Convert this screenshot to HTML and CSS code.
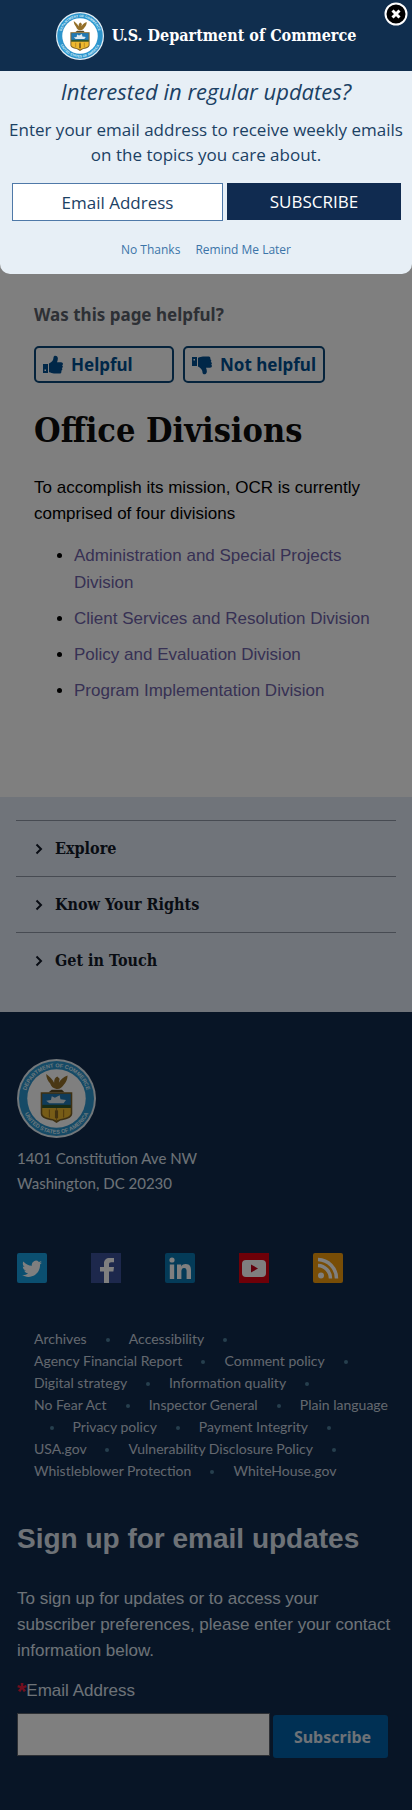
FILE: index.html
```
<!DOCTYPE html>
<html lang="en">
<head>
<meta charset="utf-8">
<meta name="viewport" content="width=device-width, initial-scale=1">
<title>Office Divisions | U.S. Department of Commerce</title>
<link rel="stylesheet" href="styles.css">
</head>
<body>
<svg class="defs" aria-hidden="true">
  <symbol id="seal" viewBox="0 0 100 100" overflow="visible">
    <circle cx="50" cy="50" r="50" fill="#e4eef5"/>
    <circle cx="50" cy="50" r="47.500" fill="#2c94cc"/>
    <circle cx="50" cy="50" r="37" fill="#fff"/>
    <path id="ring-top" d="M10.500 50a39.500 39.500 0 0 1 79 0" fill="none"/>
    <path id="ring-bottom" d="M5.500 50a44.500 44.500 0 0 0 89 0" fill="none"/>
    <g class="seal-text">
      <text><textPath href="#ring-top" startOffset="50%">DEPARTMENT OF COMMERCE</textPath></text>
      <text><textPath href="#ring-bottom" startOffset="50%">UNITED STATES OF AMERICA</textPath></text>
    </g>
    <path d="M50 38c-4-1-7-3-8-7-3-3-5-7-5-12 4 3 8 7 10 11 0-4 1-7 4-8l3 3-1 5c2-4 6-7 11-9 0 5-2 9-5 12-2 3-4 5-8 5z" fill="#94702a"/>
    <path d="M44 39h13l3 3H40z" fill="#5b4a24"/>
    <path d="M30 42h40v27c0 6-9 8-15 9l-5 3-5-3c-6-1-15-3-15-9z" fill="#7d6125"/>
    <path d="M32 44h36v15H32z" fill="#2179b4"/>
    <path d="M37 53l6-1 1-5 4 2 6-3 1 5 7 1-3 4H41z" fill="#dfeaf0"/>
    <path d="M32 58h36v4H32z" fill="#31582f"/>
    <path d="M32 62h36v7c0 4-8 6-13 7l-5 2-5-2c-5-1-13-3-13-7z" fill="#efb92f"/>
    <path d="M50 62v16M41 64v10M59 64v10" stroke="#a97a20" stroke-width="1.500"/>
    <path d="M48 65h4v10h-4z" fill="#876520"/>
  </symbol>
  <symbol id="thumb" viewBox="0 0 20 20">
    <path d="M0 9h5v9H0zM1.500 14.500v1.500H3v-1.500z" fill-rule="evenodd"/>
    <path d="M6 8.500C9 7 10.500 5 10.500 2.500c0-2.500 4-2.500 4.300.5.200 1.600-.3 3-.8 4.200H18c2.200 0 2.500 2.500 1.100 3 1.200.8.900 2.500-.3 2.800.9.900.5 2.400-.6 2.700.6 1.200 0 2.800-1.400 2.800H11c-2 0-3-.8-5-1.200z"/>
  </symbol>
</svg>

<main class="content">
  <section class="feedback">
    <h2 class="feedback-title">Was this page helpful?</h2>
    <div class="feedback-buttons">
      <button class="vote vote-yes" type="button"><svg class="vote-icon"><use href="#thumb"/></svg>Helpful</button>
      <button class="vote" type="button"><svg class="vote-icon vote-icon-down"><use href="#thumb"/></svg>Not helpful</button>
    </div>
  </section>
  <h1 class="page-title">Office Divisions</h1>
  <p class="intro">To accomplish its mission, OCR is currently comprised of four divisions</p>
  <ul class="divisions">
    <li><a href="#">Administration and Special Projects Division</a></li>
    <li><a href="#">Client Services and Resolution Division</a></li>
    <li><a href="#">Policy and Evaluation Division</a></li>
    <li><a href="#">Program Implementation Division</a></li>
  </ul>
</main>

<nav class="sections" aria-label="Sections">
  <button class="section-toggle" type="button"><svg class="chevron" viewBox="0 0 8 12"><path d="M1.500 1.500L6 6l-4.500 4.500"/></svg>Explore</button>
  <button class="section-toggle" type="button"><svg class="chevron" viewBox="0 0 8 12"><path d="M1.500 1.500L6 6l-4.500 4.500"/></svg>Know Your Rights</button>
  <button class="section-toggle" type="button"><svg class="chevron" viewBox="0 0 8 12"><path d="M1.500 1.500L6 6l-4.500 4.500"/></svg>Get in Touch</button>
</nav>

<footer class="footer">
  <svg class="footer-seal" role="img" aria-label="Department of Commerce seal"><use href="#seal"/></svg>
  <address class="address">1401 Constitution Ave NW<br>Washington, DC 20230</address>
  <div class="social">
    <a href="#" aria-label="Twitter"><svg viewBox="0 0 30 30"><rect width="30" height="30" rx="2" fill="#169fe0"/><path d="M25 9.500c-.7.300-1.500.6-2.300.7.800-.5 1.500-1.300 1.800-2.200-.8.500-1.700.8-2.600 1a4.100 4.100 0 0 0-7 3.700c-3.400-.2-6.400-1.800-8.500-4.300-1.100 1.900-.6 4.300 1.300 5.500-.7 0-1.300-.2-1.900-.5 0 2 1.400 3.700 3.300 4.100-.6.200-1.200.2-1.900.1.500 1.600 2 2.800 3.900 2.800A8.300 8.300 0 0 1 5 22.100c1.800 1.200 4 1.800 6.300 1.800 7.700 0 12-6.500 11.700-12.300.8-.6 1.500-1.300 2-2.100z" fill="#fff"/></svg></a>
    <a href="#" aria-label="Facebook"><svg viewBox="0 0 30 30"><rect width="30" height="30" fill="#3b5098"/><path d="M13 30V18.500H9V14h4v-3.500C13 7 15.200 5 18.500 5H23v4.300h-2.700c-1.800 0-2.300.7-2.300 2.200V14h5l-.6 4.500H18V30z" fill="#fff"/></svg></a>
    <a href="#" aria-label="LinkedIn"><svg viewBox="0 0 30 30"><rect width="30" height="30" rx="2" fill="#0877b0"/><circle cx="7" cy="7" r="2.600" fill="#fff"/><path d="M4.800 11.500h4.400V26H4.800zM12 11.500h4.200v2c1-1.600 2.500-2.400 4.500-2.400 4.300 0 5.300 2.800 5.300 6.700V26h-4.400v-7.300c0-2-.2-3.800-2.500-3.800s-2.700 1.800-2.700 3.700V26H12z" fill="#fff"/></svg></a>
    <a href="#" aria-label="YouTube"><svg viewBox="0 0 30 30"><rect width="30" height="30" fill="#dd0010"/><rect x="3" y="7" width="24" height="17" rx="4" fill="#fff"/><path d="M12 11.500l7 4-7 4z" fill="#c4001a"/></svg></a>
    <a href="#" aria-label="RSS"><svg viewBox="0 0 30 30"><rect width="30" height="30" rx="2" fill="#f09a0c"/><circle cx="8" cy="22.500" r="3" fill="#fff"/><path d="M5 12.500a13 13 0 0 1 12.500 13M5 6.500a19 19 0 0 1 18.500 19" fill="none" stroke="#fff" stroke-width="3.500"/></svg></a>
  </div>
  <ul class="footer-links">
    <li><a href="#">Archives</a> <span class="dot"></span></li>
    <li><a href="#">Accessibility</a> <span class="dot"></span></li>
    <li><a href="#">Agency Financial Report</a> <span class="dot"></span></li>
    <li><a href="#">Comment policy</a> <span class="dot"></span></li>
    <li><a href="#">Digital strategy</a> <span class="dot"></span></li>
    <li><a href="#">Information quality</a> <span class="dot"></span></li>
    <li><a href="#">No Fear Act</a> <span class="dot"></span></li>
    <li><a href="#">Inspector General</a> <span class="dot"></span></li>
    <li><a href="#">Plain language</a> <span class="dot"></span></li>
    <li><a href="#">Privacy policy</a> <span class="dot"></span></li>
    <li><a href="#">Payment Integrity</a> <span class="dot"></span></li>
    <li><a href="#">USA.gov</a> <span class="dot"></span></li>
    <li><a href="#">Vulnerability Disclosure Policy</a> <span class="dot"></span></li>
    <li><a href="#">Whistleblower Protection</a> <span class="dot"></span></li>
    <li><a href="#">WhiteHouse.gov</a></li>
  </ul>
  <form class="signup">
    <h2 class="signup-title">Sign up for email updates</h2>
    <p class="signup-text">To sign up for updates or to access your subscriber preferences, please enter your contact information below.</p>
    <label class="signup-label" for="signup-email"><span class="required">*</span>Email Address</label>
    <div class="signup-row">
      <input class="signup-input" id="signup-email" type="email">
      <button class="signup-button" type="submit">Subscribe</button>
    </div>
  </form>
</footer>

<div class="overlay"></div>

<div class="modal" role="dialog" aria-labelledby="modal-title">
  <header class="modal-header">
    <svg class="modal-seal" role="img" aria-label="Department of Commerce seal"><use href="#seal"/></svg>
    <span class="modal-brand">U.S. Department of Commerce</span>
  </header>
  <button class="modal-close" type="button" aria-label="Close"><svg viewBox="0 0 24 24"><circle cx="12" cy="12" r="10.500" fill="#000" stroke="#fff" stroke-width="2"/><path d="M8.500 8.500l7 7M15.500 8.500l-7 7" stroke="#fff" stroke-width="3"/></svg></button>
  <form class="modal-form">
    <h2 class="modal-title" id="modal-title">Interested in regular updates?</h2>
    <p class="modal-text">Enter your email address to receive weekly emails on the topics you care about.</p>
    <div class="modal-row">
      <input class="modal-input" type="email" placeholder="Email Address" aria-label="Email Address">
      <button class="modal-submit" type="submit">SUBSCRIBE</button>
    </div>
    <div class="modal-links"><a href="#">No Thanks</a><a href="#">Remind Me Later</a></div>
  </form>
</div>
</body>
</html>
```
FILE: styles.css
```
* { box-sizing: border-box; }

body {
  position: relative;
  margin: 0;
  background: #fff;
  color: #000;
  font: 17px/26px "Liberation Sans", Arial, sans-serif;
}

h1, h2, p, ul { margin: 0; padding: 0; }
a { text-decoration: none; }
button, input { font: inherit; margin: 0; }
button { cursor: pointer; }

.defs { position: absolute; width: 0; height: 0; }
.seal-text {
  fill: #d9effa;
  font: bold 7px "Liberation Sans", Arial, sans-serif;
  text-anchor: middle;
}

/* Main content */
.content { padding: 301px 34px 93px; }
.feedback-title {
  color: #5b616b;
  font: bold 17px/28px "Noto Sans", sans-serif;
}
.feedback-buttons {
  display: flex;
  gap: 9px;
  margin-top: 17px;
}
.vote {
  display: flex;
  align-items: center;
  gap: 8px;
  height: 37px;
  padding: 0 7px;
  border: 2px solid #0b4778;
  border-radius: 5px;
  background: none;
  color: #004f91;
  font: bold 17px/24px "Noto Sans", sans-serif;
}
.vote-yes { width: 140px; }
.vote-icon { width: 20px; height: 20px; fill: currentColor; }
.vote-icon-down { transform: scaleY(-1); }
.page-title {
  margin-top: 24px;
  color: #0c0c0c;
  font: bold 34px/46px "DejaVu Serif Condensed", "DejaVu Serif", serif;
}
.intro { margin-top: 22px; }
.divisions {
  margin-top: 15px;
  padding-left: 40px;
  line-height: 27px;
}
.divisions li + li { margin-top: 9px; }
.divisions a { color: #6e62a8; }

/* Section toggles */
.sections {
  padding: 23px 16px 24px;
  background: #e1e9f4;
}
.section-toggle {
  display: flex;
  align-items: center;
  gap: 12px;
  width: 100%;
  height: 56px;
  padding: 0 19px;
  border: 0;
  border-top: 1px solid #8e97a5;
  background: none;
  color: #111827;
  font: bold 16px/24px "DejaVu Serif Condensed", "DejaVu Serif", serif;
}
.chevron {
  width: 8px;
  height: 12px;
  fill: none;
  stroke: currentColor;
  stroke-width: 2;
}

/* Footer */
.footer {
  padding: 47px 16px 53px 17px;
  background: #112a4c;
  color: #dce4ef;
}
.footer-seal { display: block; width: 79px; height: 79px; }
.address {
  margin-top: 8px;
  font: normal 15px/25px Lato, sans-serif;
}
.social {
  display: flex;
  gap: 44px;
  margin-top: 57px;
}
.social a { width: 30px; height: 30px; }
.social svg { display: block; width: 30px; height: 30px; }
.footer-links {
  margin-top: 45px;
  padding: 0 4px 0 17px;
  list-style: none;
  font: 14px/22px Lato, sans-serif;
}
.footer-links li { display: inline; }
.footer-links a { color: #c6d0de; white-space: nowrap; }
.dot {
  display: inline-block;
  width: 35px;
  text-align: center;
}
.dot::before {
  content: "";
  display: inline-block;
  width: 4px;
  height: 4px;
  border-radius: 50%;
  background: #4d7f9c;
  vertical-align: middle;
}
.signup { margin-top: 39px; }
.signup-title { font-size: 28px; line-height: 36px; }
.signup-text { margin-top: 29px; }
.signup-label { display: block; margin-top: 14px; }
.required {
  color: #e31c3d;
  font-size: 24px;
  font-weight: bold;
  line-height: 16px;
  vertical-align: middle;
}
.signup-row {
  display: flex;
  align-items: flex-end;
  gap: 3px;
  margin-top: 9px;
  padding-right: 8px;
}
.signup-input {
  flex: 1;
  min-width: 0;
  height: 43px;
  margin-bottom: 2px;
  border: 1px solid #5b616b;
  background: #fff;
}
.signup-button {
  width: 115px;
  height: 43px;
  padding: 0 0 0 4px;
  border: 0;
  border-radius: 3px;
  background: #0060a8;
  color: #dce4ef;
  font: bold 16px/24px "Noto Sans", sans-serif;
}

/* Dimming layer over the page */
.overlay {
  position: absolute;
  inset: 0;
  background: rgba(0, 0, 0, 0.5);
}

/* Subscription prompt */
.modal {
  position: absolute;
  inset: 0 0 auto;
  overflow: hidden;
  border-radius: 0 0 10px 10px;
  background: #e7eff6;
  color: #1b4164;
  font-family: "Open Sans", sans-serif;
}
.modal-header {
  display: flex;
  align-items: center;
  justify-content: center;
  gap: 8px;
  height: 71px;
  background: #102e4e;
}
.modal-seal { width: 48px; height: 48px; }
.modal-brand {
  color: #fff;
  font: bold 16px/24px "DejaVu Serif Condensed", "DejaVu Serif", serif;
}
.modal-close {
  position: absolute;
  top: 2px;
  right: 4px;
  width: 24px;
  height: 24px;
  padding: 0;
  border: 0;
  background: none;
}
.modal-close svg { display: block; }
.modal-form { padding: 5px 8px 14px; text-align: center; }
.modal-title {
  font-size: 22px;
  font-style: italic;
  font-weight: normal;
  line-height: 30px;
}
.modal-text { margin-top: 11px; line-height: 25px; }
.modal-row {
  display: flex;
  gap: 4px;
  margin-top: 16px;
  padding: 0 3px 0 4px;
}
.modal-input,
.modal-submit {
  min-width: 0;
  padding: 0;
  text-align: center;
}
.modal-input {
  flex: 6;
  height: 38px;
  border: 1px solid #4f79a8;
  background: #fff;
}
.modal-input::placeholder { color: #1b4164; opacity: 1; }
.modal-submit {
  flex: 5;
  height: 37px;
  border: 0;
  background: #102b50;
  color: #fff;
}
.modal-links {
  display: flex;
  justify-content: center;
  gap: 15px;
  margin-top: 19px;
  font-size: 12px;
  line-height: 20px;
}
.modal-links a { color: #3b74a8; }
```
